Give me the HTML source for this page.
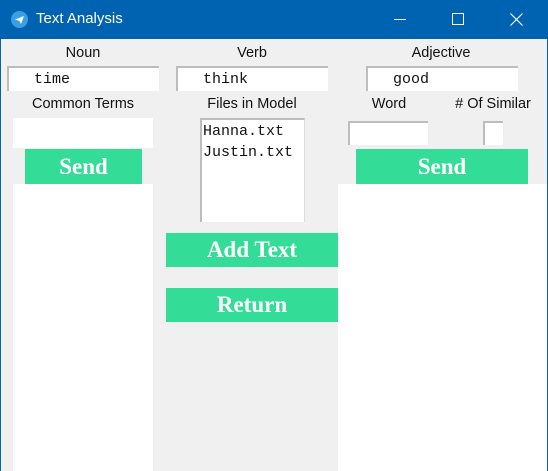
<!DOCTYPE html>
<html><head><style>
body{margin:0;width:548px;height:471px;overflow:hidden;background:#f0f0f0;font-family:"Liberation Sans",sans-serif;position:relative}
.a{position:absolute}
.t{position:absolute;font-size:14.5px;color:#111;text-align:center}
.e{position:absolute;background:#fff;border-top:2px solid #bdbdbd;border-left:2px solid #bdbdbd;box-sizing:border-box;font-family:"Liberation Mono",monospace;font-size:15px;color:#111;line-height:24px}
.w{position:absolute;background:#fff}
.b{position:absolute;background:#34dd97;color:#fff;font-family:"Liberation Serif",serif;font-weight:bold;font-size:23px;text-align:center;line-height:35px}
</style></head><body>
<div class="a" style="left:0;top:0;width:548px;height:39px;background:#0063b1"></div>
<div class="a" style="left:0;top:39px;width:1px;height:432px;background:#0063b1"></div>
<div class="a" style="left:547px;top:39px;width:1px;height:432px;background:#0063b1"></div>
<svg class="a" style="left:11px;top:11px" width="17" height="17"><circle cx="8.5" cy="8.5" r="8.5" fill="#3aa0e0"/><path d="M4 8.5 L13 5 L10 13 L8.5 10 Z" fill="#fff"/></svg>
<div class="a" style="left:36px;top:10px;color:#fff;font-size:15px">Text Analysis</div>
<div class="a" style="left:394px;top:19px;width:12px;height:1px;background:#fff"></div>
<div class="a" style="left:452px;top:13px;width:10px;height:10px;border:1px solid #fff"></div>
<svg class="a" style="left:510px;top:13px" width="13" height="13"><path d="M0.5 0.5L12.5 12.5M12.5 0.5L0.5 12.5" stroke="#fff" stroke-width="1.2"/></svg>

<div class="t" style="left:33px;top:45px;width:100px">Noun</div>
<div class="t" style="left:202px;top:45px;width:100px">Verb</div>
<div class="t" style="left:391px;top:45px;width:100px">Adjective</div>
<div class="e" style="left:7px;top:66px;width:152px;height:25px;padding-left:25px">time</div>
<div class="e" style="left:176px;top:66px;width:152px;height:25px;padding-left:25px">think</div>
<div class="e" style="left:366px;top:66px;width:152px;height:25px;padding-left:25px">good</div>

<div class="t" style="left:13px;top:96px;width:140px">Common Terms</div>
<div class="t" style="left:190px;top:96px;width:124px">Files in Model</div>
<div class="t" style="left:349px;top:96px;width:80px">Word</div>
<div class="t" style="left:446px;top:96px;width:94px">&#35; Of Similar</div>

<div class="w" style="left:13px;top:118px;width:140px;height:30px"></div>
<div class="b" style="left:25px;top:149px;width:117px;height:35px">Send</div>
<div class="w" style="left:13px;top:184px;width:140px;height:287px"></div>

<div class="e" style="left:200px;top:118px;width:105px;height:104px;border-right:1px solid #ddd;padding-left:1px;font-size:15px;line-height:21px;padding-top:1px">Hanna.txt<br>Justin.txt</div>

<div class="e" style="left:348px;top:121px;width:80px;height:24px"></div>
<div class="e" style="left:483px;top:121px;width:20px;height:24px"></div>
<div class="b" style="left:356px;top:149px;width:172px;height:35px">Send</div>
<div class="w" style="left:338px;top:184px;width:209px;height:287px"></div>

<div class="b" style="left:166px;top:233px;width:172px;height:34px;line-height:34px">Add Text</div>
<div class="b" style="left:166px;top:288px;width:172px;height:34px;line-height:34px">Return</div>
</body></html>
